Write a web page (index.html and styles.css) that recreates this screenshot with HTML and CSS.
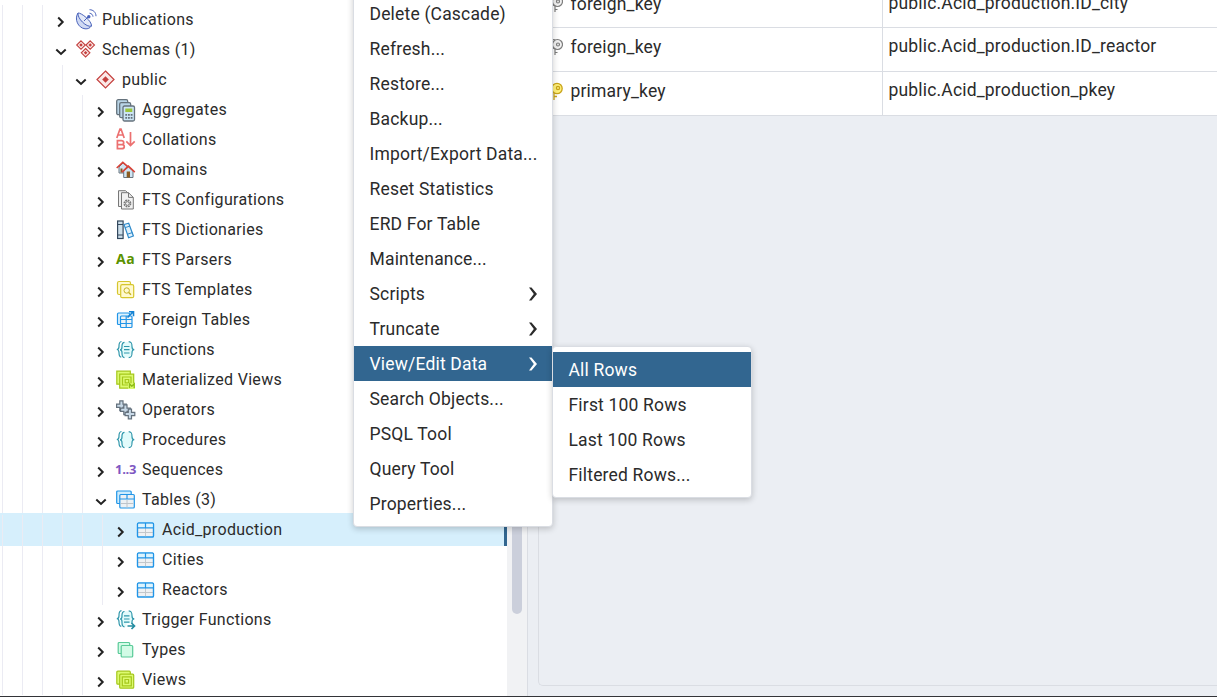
FILE: index.html
```html
<!DOCTYPE html>
<html lang="en">
<head>
<meta charset="utf-8">
<title>Object Explorer</title>
<link rel="stylesheet" href="styles.css">
</head>
<body>
<svg class="defs" aria-hidden="true">
  <symbol id="right" viewBox="0 0 14 14"><path d="M4.200 2.500l4.500 4.500-4.500 4.500" fill="none" stroke="#222" stroke-width="2"/></symbol>
  <symbol id="down" viewBox="0 0 14 14"><path d="M2.300 4.500L7 8.900l4.700-4.400" fill="none" stroke="#222" stroke-width="2"/></symbol>
  <symbol id="table" viewBox="0 0 20 20"><rect x="1.500" y="3" width="16" height="14" rx="1" fill="#eff1f3" stroke="#2195e7" stroke-width="1.200"/><path d="M2 3.500h15v4H2z" fill="#def4fd"/><path d="M2 12.500h15M9.500 8v9" stroke="#c3c7cb"/><path d="M1.500 7.800h16M9.500 3v5" stroke="#2195e7" stroke-width="1.200"/><rect x="1.500" y="3" width="16" height="14" rx="1" fill="none" stroke="#2195e7" stroke-width="1.200"/></symbol>
  <symbol id="braces" viewBox="0 0 20 20"><path d="M7.500 2h5.500l3.500 4v7L13 17.500H7.500L4.500 13V6z" fill="#e1fbfb"/><g fill="none" stroke="#2f97ab" stroke-width="1.200"><path d="M5.500 1.500C2.800 1.800 3 4 3 6.500 3 8.500 2 9.500.8 9.500 2 9.500 3 10.500 3 12.500c0 2.500 0 4.200 2.300 4.700M8.500 2.300C5.500 2.500 6 5 6 7c0 1.700-.8 2.800-2 2.800 1.200 0 2 1 2 2.800 0 2.200-.3 4.700 2.500 5M12.700 1.700c3.300.2 3.300 2.500 3.300 5 0 2 1 3 2.300 3-1.300 0-2.300 1-2.300 3 0 2.500 0 4.700-3.300 5"/></g></symbol>
</svg>
<div class="app">
  <div class="tree">
    <div class="row l3"><svg class="chev"><use href="#right"/></svg><svg class="ico" viewBox="0 0 20 20"><path d="M2 3C-2 9 2 18 9 18.800c3 .3 5-.8 6-2.500z" fill="#cfd9f3" stroke="#4a63bb"/><path d="M2 3c3-.5 14 8 13.500 13-5 2-14.500-8-13.500-13z" fill="#e3e9f8" stroke="#4a63bb"/><path d="M8 11l4.500-4.500" stroke="#4a63bb"/><circle cx="12.800" cy="6.800" r="1.700" fill="#4a63bb"/><path d="M13.500 3.200c2 .2 3.300 1.500 3.500 3.500M13.500-.3c3.800 0 6.500 2.700 6.500 6.500" fill="none" stroke="#4a63bb"/></svg><span>Publications</span></div>
    <div class="row l3"><svg class="chev"><use href="#down"/></svg><svg class="ico" viewBox="0 0 20 20"><g fill="#fbe9e8" stroke="#c4403e" stroke-width="1.100"><path d="M5 .8L9.300 5 5 9.300.700 5zM14.200.8l4.300 4.200-4.300 4.300L9.900 5zM9.600 8.500l4.300 4.300-4.300 4.200-4.300-4.200z"/></g><path d="M5 3.200L6.800 5 5 6.800 3.200 5zM14.200 3.200L16 5l-1.800 1.800L12.400 5zM9.600 11l1.800 1.800-1.800 1.800-1.800-1.800z" fill="#c4403e"/></svg><span>Schemas (1)</span></div>
    <div class="row l4"><svg class="chev"><use href="#down"/></svg><svg class="ico" viewBox="0 0 20 20"><path d="M9.500 1l8.500 8.500L9.500 18 1 9.500z" fill="#fbe9e8" stroke="#c4403e" stroke-width="1.200"/><path d="M9.500 6.200l3.300 3.300-3.300 3.300-3.300-3.300z" fill="#c4403e"/></svg><span>public</span></div>
    <div class="row l5"><svg class="chev"><use href="#right"/></svg><svg class="ico calc" viewBox="0 0 20 23"><g fill="#b9d4e6" stroke="#65727c" stroke-width="1.300"><rect x=".7" y=".7" width="11" height="15" rx="1.500"/><rect x="3.700" y="3.700" width="11" height="15" rx="1.500"/><rect x="7" y="7" width="11.500" height="15" rx="1.500" fill="#cce5f5"/></g><path d="M9.300 9.500h7V13h-7z" fill="#9bc53d"/><path d="M9.300 15h1.800v1.800H9.300zM12 15h1.800v1.800H12zM14.700 15h1.800v1.800h-1.800zM9.300 18h1.800v1.800H9.300zM12 18h1.800v1.800H12zM14.700 18h1.800v1.800h-1.800z" fill="#65727c"/></svg><span>Aggregates</span></div>
    <div class="row l5"><svg class="chev"><use href="#right"/></svg><svg class="ico coll" viewBox="0 0 20 22"><g fill="none" stroke="#ec7070" stroke-width="1.700"><path d="M.8 10L4 1h1l3.200 9M2 7h5M1.400 12.700v8h4c4 0 3.500-4 .5-4 2.500-.3 2.500-4-.5-4zM1.400 16.700h4.500"/><path d="M14.500 4v13.500M10.300 13.300l4.200 4.200 4.200-4.200"/></g></svg><span>Collations</span></div>
    <div class="row l5"><svg class="chev"><use href="#right"/></svg><svg class="ico" viewBox="0 0 20 20"><path d="M3 7v6h8V6L7 3z" fill="#cfe5f4" stroke="#6b7680"/><path d="M4.500 8.500h2v4h-2z" fill="#8b5c20"/><path d="M.7 8L6.800 2.300 13 7.500" fill="none" stroke="#d94338" stroke-width="1.600"/><path d="M7.700 11v6.500h9.300V11l-4.600-4z" fill="#cfe5f4" stroke="#6b7680"/><path d="M10.700 11.500h3.300v6h-3.300z" fill="#8b5c20"/><path d="M6 12.200l6.400-6 6.400 6" fill="none" stroke="#d94338" stroke-width="1.600"/></svg><span>Domains</span></div>
    <div class="row l5"><svg class="chev"><use href="#right"/></svg><svg class="ico" viewBox="0 0 20 20"><path d="M5 16.500H2.500V.7h7L12 3" fill="#eee" stroke="#777"/><path d="M5.500 2.700h7l4.800 4.700V19H5.500z" fill="#f1f1f1" stroke="#777"/><path d="M12.500 2.700v4.700h4.800" fill="none" stroke="#777"/><circle cx="11.400" cy="13.500" r="3.200" fill="none" stroke="#777" stroke-width="1.500" stroke-dasharray="1.700 .8"/><circle cx="11.400" cy="13.500" r="1.900" fill="#eee" stroke="#777"/></svg><span>FTS Configurations</span></div>
    <div class="row l5"><svg class="chev"><use href="#right"/></svg><svg class="ico" viewBox="0 0 20 20"><rect x="1.600" y="1" width="5.500" height="17.500" fill="#cddfea" stroke="#34495e" stroke-width="1.200"/><path d="M1.600 4.500h5.500M1.600 15h5.500" stroke="#34495e"/><path d="M8 4.500l4.700-1.300L17.400 16l-4.800 1.700z" fill="#dff0fb" stroke="#2d8acb" stroke-width="1.200"/><path d="M9.200 7.600l4.700-1.500M11.500 14.200l4.800-1.600" stroke="#2d8acb"/></svg><span>FTS Dictionaries</span></div>
    <div class="row l5"><svg class="chev"><use href="#right"/></svg><b class="ico aa">Aa</b><span>FTS Parsers</span></div>
    <div class="row l5"><svg class="chev"><use href="#right"/></svg><svg class="ico" viewBox="0 0 20 20"><g fill="#fff9cf" stroke="#d6c62d" stroke-width="1.200"><rect x="1.500" y="1.500" width="13" height="13" rx="1.500"/><rect x="4.700" y="4.700" width="13" height="13" rx="1.500"/></g><circle cx="10.700" cy="10.500" r="2.700" fill="none" stroke="#c4b11e"/><path d="M12.700 12.500l2.300 2.300" stroke="#c4b11e" stroke-width="1.300"/></svg><span>FTS Templates</span></div>
    <div class="row l5"><svg class="chev"><use href="#right"/></svg><svg class="ico" viewBox="0 0 20 20"><g fill="#def2fd" stroke="#2195e7" stroke-width="1.200"><rect x="1.500" y="3" width="12" height="11.500" rx="1"/><rect x="4.500" y="6" width="11.500" height="11.500" rx="1" fill="#eef3f6"/></g><path d="M4.500 9.500H16M10.200 6v11.500M4.500 13.500H16" stroke="#2195e7" stroke-width="1.200"/><path d="M11.500 7.500L17 2M13 1.700h4.500v4.500" fill="none" stroke="#1683d3" stroke-width="1.600"/></svg><span>Foreign Tables</span></div>
    <div class="row l5"><svg class="chev"><use href="#right"/></svg><svg class="ico" viewBox="0 0 20 20"><use href="#braces"/><path d="M8 6.500h5.500M8 9.700h5.500M8 13h5.500" stroke="#2f97ab" stroke-width="1.200"/></svg><span>Functions</span></div>
    <div class="row l5"><svg class="chev"><use href="#right"/></svg><svg class="ico" viewBox="0 0 20 20"><g fill="#dcfa70" stroke="#a5c71b" stroke-width="1.200"><path d="M.8 1.200h13.500v13H.8z"/><path d="M3.700 4.200h14v14h-14z"/><path d="M6.500 7h8.500v8H6.500zM9.200 9.500h3.500v3.300H9.200z"/></g><path d="M12 13.200h7V19h-7z" fill="#dcfa70"/><path d="M13.500 18v-4.200l2.300 2.500 2.400-2.500V18" fill="none" stroke="#8fbd17" stroke-width="1.300"/></svg><span>Materialized Views</span></div>
    <div class="row l5"><svg class="chev"><use href="#right"/></svg><svg class="ico" viewBox="0 0 20 20"><g fill="#c8d9e7" stroke="#64717d" stroke-width="1.200"><path id="plus" d="M3.800.8H7v3.300h3.300v3.200H7v3.300H3.800V7.300H.6V4.100h3.200z"/><use href="#plus" x="4" y="4"/><use href="#plus" x="8.500" y="8.300"/></g></svg><span>Operators</span></div>
    <div class="row l5"><svg class="chev"><use href="#right"/></svg><svg class="ico"><use href="#braces"/></svg><span>Procedures</span></div>
    <div class="row l5"><svg class="chev"><use href="#right"/></svg><b class="ico seq">1..3</b><span>Sequences</span></div>
    <div class="row l5"><svg class="chev"><use href="#down"/></svg><svg class="ico" viewBox="0 0 20 20"><g stroke="#2195e7" stroke-width="1.200"><rect x=".7" y="1" width="14.500" height="12.500" rx="1" fill="#cdecfd"/><rect x="3.800" y="4.500" width="14.500" height="13.500" rx="1" fill="#edf1f4"/><path d="M3.800 9h14.500M11 4.500V9"/></g><path d="M4.500 13.500h13M11 9.700v8" stroke="#bec4ca"/></svg><span>Tables (3)</span></div>
    <div class="row l6 selected"><svg class="chev"><use href="#right"/></svg><svg class="ico"><use href="#table"/></svg><span>Acid_production</span></div>
    <div class="row l6"><svg class="chev"><use href="#right"/></svg><svg class="ico"><use href="#table"/></svg><span>Cities</span></div>
    <div class="row l6"><svg class="chev"><use href="#right"/></svg><svg class="ico"><use href="#table"/></svg><span>Reactors</span></div>
    <div class="row l5"><svg class="chev"><use href="#right"/></svg><svg class="ico" viewBox="0 0 20 20"><use href="#braces" y="-.8"/><path d="M10.500 13.300H20V20h-9.500z" fill="#fff"/><path d="M8 5.800h5.500M8 9h5.500M8 12.200h5.500" stroke="#2f97ab" stroke-width="1.200"/><path d="M11.500 16h6.500M15.500 13l3 3-3 3" fill="none" stroke="#258da1" stroke-width="1.700"/></svg><span>Trigger Functions</span></div>
    <div class="row l5"><svg class="chev"><use href="#right"/></svg><svg class="ico" viewBox="0 0 20 20"><g fill="#d2fbe6" stroke="#59ca98" stroke-width="1.200"><rect x="2.200" y="2.500" width="11.500" height="11" rx="1"/><rect x="5.200" y="5.500" width="11.500" height="11.500" rx="1"/></g></svg><span>Types</span></div>
    <div class="row l5"><svg class="chev"><use href="#right"/></svg><svg class="ico" viewBox="0 0 20 20"><g fill="#dcfa70" stroke="#a5c71b" stroke-width="1.200"><rect x=".8" y="1.200" width="13.500" height="13" rx="1"/><rect x="3.700" y="4.200" width="14" height="14" rx="1"/><path d="M6.300 6.800h9v9h-9zM9 9.500h3.600v3.600H9z"/></g></svg><span>Views</span></div>
  </div>
  <div class="track"><div class="thumb"></div></div>
  <main class="content">
    <div class="panel">
      <div class="grid">
        <div class="cell type first"><svg class="key" viewBox="0 0 16 20"><g fill="#f1f1f1" stroke="#7d7d7d" stroke-width="1.200"><circle cx="6" cy="7" r="4.500"/><path d="M8 11v7M8 15.500h2.500"/><circle cx="10.500" cy="7.500" r="5"/><circle cx="11" cy="7.500" r="1.500"/></g></svg>foreign_key</div><div class="cell first">public.Acid_production.ID_city</div>
        <div class="cell type"><svg class="key" viewBox="0 0 16 20"><g fill="#f1f1f1" stroke="#7d7d7d" stroke-width="1.200"><circle cx="6" cy="7" r="4.500"/><path d="M8 11v7M8 15.500h2.500"/><circle cx="10.500" cy="7.500" r="5"/><circle cx="11" cy="7.500" r="1.500"/></g></svg>foreign_key</div><div class="cell">public.Acid_production.ID_reactor</div>
        <div class="cell type"><svg class="key" viewBox="0 0 16 20"><g fill="#fff17b" stroke="#c9a41b" stroke-width="1.300"><path d="M7 12v7M7 15.500h3"/><circle cx="10" cy="7.500" r="5.200"/><circle cx="11" cy="7" r="1.600"/></g></svg>primary_key</div><div class="cell">public.Acid_production_pkey</div>
      </div>
    </div>
  </main>
</div>
<div class="menu main">
  <div class="item">Delete (Cascade)</div>
  <div class="item">Refresh...</div>
  <div class="item">Restore...</div>
  <div class="item">Backup...</div>
  <div class="item">Import/Export Data...</div>
  <div class="item">Reset Statistics</div>
  <div class="item">ERD For Table</div>
  <div class="item">Maintenance...</div>
  <div class="item">Scripts<svg class="sub" viewBox="0 0 10 14"><path d="M1 .5h2.500L9 7l-5.500 6.500H1L5.800 7z"/></svg></div>
  <div class="item">Truncate<svg class="sub" viewBox="0 0 10 14"><path d="M1 .5h2.500L9 7l-5.500 6.500H1L5.800 7z"/></svg></div>
  <div class="item active">View/Edit Data<svg class="sub" viewBox="0 0 10 14"><path d="M1 .5h2.500L9 7l-5.500 6.500H1L5.800 7z"/></svg></div>
  <div class="item">Search Objects...</div>
  <div class="item">PSQL Tool</div>
  <div class="item">Query Tool</div>
  <div class="item">Properties...</div>
</div>
<div class="menu submenu">
  <div class="item active">All Rows</div>
  <div class="item">First 100 Rows</div>
  <div class="item">Last 100 Rows</div>
  <div class="item">Filtered Rows...</div>
</div>
</body>
</html>
```
FILE: styles.css
```css
* { box-sizing: border-box; }
body { margin: 0; width: 1217px; height: 697px; overflow: hidden; position: relative; font-family: Roboto, sans-serif; color: #2b2b2b; background: #fff; }
.defs { position: absolute; width: 0; height: 0; }
.app { display: flex; height: 697px; border-bottom: 1px solid #333438; }
.tree { width: 507px; padding-top: 5px; overflow: hidden; flex: none; }
.row {
  --guides: calc(var(--level) * 20px);
  height: 30px; display: flex; align-items: center;
  padding-left: calc(var(--guides) - 6px);
  font-size: 16px; letter-spacing: .32px; white-space: nowrap;
  background: repeating-linear-gradient(to right, transparent 0 2px, #ebebf3 2px 3px, transparent 3px 20px) 0 0 / var(--guides) 30px no-repeat;
}
.row span { padding-bottom: 2px; }
.l3 { --level: 3; }
.l4 { --level: 4; }
.l5 { --level: 5; }
.l6 { --level: 6; }
.row.selected { height: 33px; margin: -2px 0 -1px; padding-top: 2px; padding-bottom: 1px; background-color: #d6effc; background-position: 0 2px; border-right: 3px solid #326690; }
.chev { width: 14px; height: 14px; margin-top: 3px; flex: none; }
.ico { width: 20px; height: 20px; margin: 0 6px 0 8px; flex: none; overflow: visible; }
.coll { height: 22px; margin-top: -2px; }
.calc { height: 23px; }
.aa { font: bold 14px/18px "Open Sans", sans-serif; color: #5b9200; letter-spacing: .5px; }
.seq { font: bold 13px/18px "Open Sans", sans-serif; color: #7e57c2; letter-spacing: -.3px; margin: 0 7px 0 7px; }
.track { width: 20px; background: #f1f2f4; flex: none; display: flex; justify-content: center; }
.thumb { width: 10px; height: 614px; background: #cbcfdb; border-radius: 5px; }
.content { flex: 1; background: #ebeef3; border-left: 1px solid #dadde3; padding: 0 0 10px 10px; }
.panel { height: 686px; border: solid #dadde3; border-width: 0 0 1px 1px; border-bottom-left-radius: 5px; overflow: hidden; }
.grid { display: grid; grid-template-columns: 344px 1fr; grid-auto-rows: 44px; margin-top: -16px; background: #fff; }
.cell { display: flex; align-items: center; padding: 0 0 8px 5.500px; border-bottom: 1px solid #dadde3; font-size: 17.500px; letter-spacing: .18px; white-space: nowrap; }
.cell.first { padding-bottom: 6px; }
.type { border-right: 1px solid #dadde3; padding-left: 8px; padding-bottom: 6px; }
.type.first { padding-bottom: 4px; }
.key { width: 16px; height: 20px; margin-right: 7.500px; }
.menu { position: absolute; background: #fff; border: 1px solid #dadde3; border-radius: 4px; box-shadow: 0 2px 6px rgba(0,0,0,.2); padding: 5px 0; }
.main { left: 353px; top: -10px; width: 200px; height: 537px; }
.submenu { left: 552px; top: 346px; width: 200px; }
.item { height: 35px; padding: 0 14px 0 15.500px; display: flex; align-items: center; justify-content: space-between; font-size: 17.500px; letter-spacing: .18px; white-space: nowrap; }
.active { background: #326690; color: #fff; }
.sub { width: 10px; height: 14px; fill: currentColor; }
```
